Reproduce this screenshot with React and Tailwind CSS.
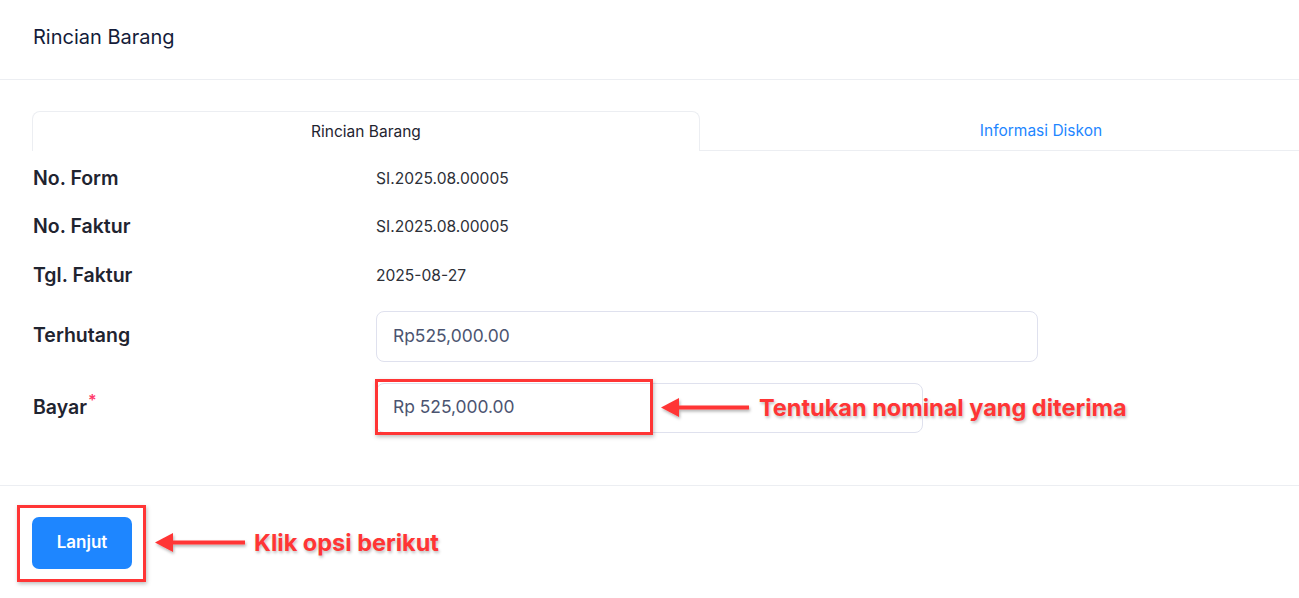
import React from "react";

function Arrow({ width = 92 }) {
  return (
    <svg width={width + 8} height="30" viewBox={`0 0 ${width + 8} 30`} className="block">
      <defs>
        <filter id="sh" x="-20%" y="-50%" width="140%" height="200%">
          <feDropShadow dx="1" dy="2" stdDeviation="1.5" floodColor="#000" floodOpacity="0.3" />
        </filter>
      </defs>
      <g filter="url(#sh)">
        <rect x="16" y="12.5" width={width - 16} height="4" fill="#ff3535" />
        <polygon points="2,14.5 20,5 20,24" fill="#ff3535" />
      </g>
    </svg>
  );
}

export default function App() {
  const font = { fontFamily: "Inter, 'Noto Sans', sans-serif" };
  return (
    <div className="relative w-[1299px] h-[598px] bg-white overflow-hidden" style={font}>
      <div className="px-[33px] pt-[23px] pb-[27px] border-b border-[#eceef2]">
        <div className="text-[20px] leading-[29px] text-[#141c3a]">Rincian Barang</div>
      </div>

      <div className="pt-[31px]">
        <div className="flex overflow-hidden">
          <div className="ml-[32px] w-[668px] shrink-0 h-[40px] border border-b-0 border-[#eceef2] rounded-t-[8px] flex items-center justify-center text-[15.5px] text-[#1f2430]">
            Rincian Barang
          </div>
          <div className="w-[682px] shrink-0 h-[40px] border-b border-[#eceef2] flex items-center justify-center text-[15.5px] text-[#1e86ff]">
            Informasi Diskon
          </div>
        </div>

        <div className="px-[33px] pt-[3px]">
          {[
            ["No. Form", "SI.2025.08.00005"],
            ["No. Faktur", "SI.2025.08.00005"],
            ["Tgl. Faktur", "2025-08-27"],
          ].map(([l, v]) => (
            <div key={l} className="flex items-center h-[48.5px]">
              <div className="w-[343px] text-[19.5px] font-semibold text-[#1f2430]">{l}</div>
              <div className="text-[15.6px] text-[#2d3038]">{v}</div>
            </div>
          ))}

          <div className="flex items-center mt-[11px]">
            <div className="w-[343px] text-[19.5px] font-semibold text-[#1f2430]">Terhutang</div>
            <div className="w-[662px] h-[51px] border border-[#dfe1ee] rounded-[8px] flex items-center pl-[16px] text-[17.4px] text-[#4b5470]">
              Rp525,000.00
            </div>
          </div>

          <div className="flex items-center mt-[21px]">
            <div className="w-[343px] text-[19.5px] font-semibold text-[#1f2430] flex items-start">
              Bayar<span className="text-[#ff3b6b] text-[16px] leading-none ml-[1px] -mt-[1px]">*</span>
            </div>
            <div className="relative w-[547px] h-[50px] border border-[#dfe1ee] rounded-[8px] flex items-center pl-[16px] text-[17.4px] text-[#4b5470]">
              Rp 525,000.00
              <div className="absolute left-[-2px] top-[-5px] w-[278px] h-[56px] border-[3px] border-[#ff3535] shadow-[1px_2px_4px_rgba(0,0,0,0.25)]"></div>
            </div>
            <div className="flex items-center -ml-[264px]">
              <Arrow width={90} />
              <span className="ml-[2px] bg-white leading-[30px] text-[23.5px] font-bold text-[#ff3535] [text-shadow:1px_2px_3px_rgba(0,0,0,0.25)]">
                Tentukan nominal yang diterima
              </span>
            </div>
          </div>
        </div>

        <div className="mt-[52px] border-t border-[#eceef2] px-[32px] pt-[31px]">
          <div className="flex items-center">
            <div className="relative">
              <button className="w-[100px] h-[52px] rounded-[7px] bg-[#1e86ff] text-white text-[17px] font-semibold">
                Lanjut
              </button>
              <div className="absolute left-[-15px] top-[-12px] w-[129px] h-[77px] border-[3px] border-[#ff3535] shadow-[1px_2px_4px_rgba(0,0,0,0.25)]"></div>
            </div>
            <div className="flex items-center ml-[21px]">
              <Arrow width={92} />
              <span className="ml-[1px] text-[23.5px] font-bold text-[#ff3535] [text-shadow:1px_2px_3px_rgba(0,0,0,0.25)]">
                Klik opsi berikut
              </span>
            </div>
          </div>
        </div>
      </div>
    </div>
  );
}
